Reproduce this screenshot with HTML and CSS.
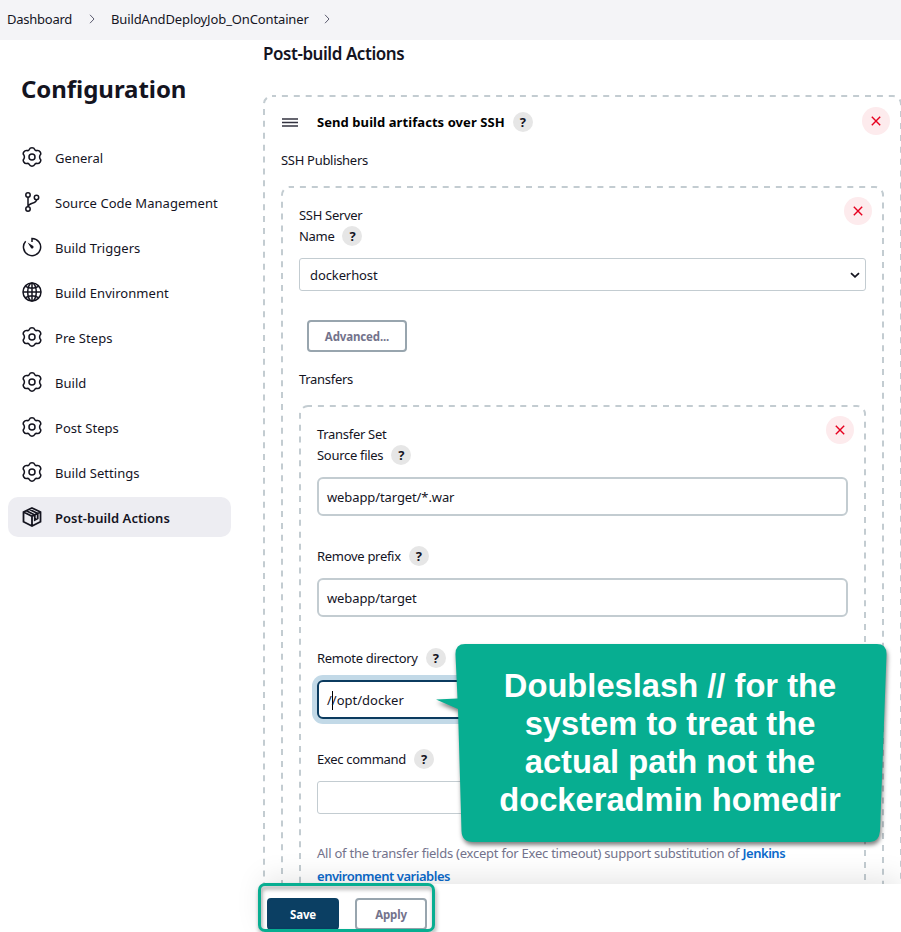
FILE: index.html
```html
<!DOCTYPE html>
<html lang="en">
<head>
<meta charset="utf-8">
<title>BuildAndDeployJob_OnContainer Config</title>
<link rel="stylesheet" href="styles.css">
</head>
<body>
<svg class="defs" width="0" height="0">
  <symbol id="cog" viewBox="0 0 20 20"><path d="M7.300 2.400Q7.900 .8 10 .8T12.700 2.400Q13.300 4 15 3.500Q17 3 18.200 5T18.200 7.900Q17 10 18.200 12.100Q19.400 13.200 18.200 15T15 16.500Q13.300 16 12.700 17.600Q12.100 19.200 10 19.200T7.300 17.600Q6.700 16 5 16.500Q3 17 1.800 15T1.800 12.100Q3 10 1.800 7.900Q.6 6.800 1.800 5T5 3.500Q6.700 4 7.300 2.400Z"/><circle cx="10" cy="10" r="3"/></symbol>
  <symbol id="cross" viewBox="0 0 10 10"><path d="M.8.8 9.200 9.200M9.200.8.8 9.200"/></symbol>
</svg>
<header class="crumbs">
  <span class="c1">Dashboard</span>
  <svg class="chev" viewBox="0 0 6 10"><path d="M1 .8 5 5 1 9.200"/></svg>
  <span class="c2">BuildAndDeployJob_OnContainer</span>
  <svg class="chev" viewBox="0 0 6 10"><path d="M1 .8 5 5 1 9.200"/></svg>
</header>
<div class="layout">
  <nav class="side">
    <h1>Configuration</h1>
    <a class="item"><svg class="ico"><use href="#cog"/></svg><span>General</span></a>
    <a class="item"><svg class="ico" viewBox="0 0 20 20"><circle cx="6" cy="3" r="2.200"/><circle cx="14.500" cy="5.500" r="2.200"/><circle cx="6" cy="17" r="2.200"/><path d="M6 5.200V14.800M14.500 7.700C14.500 12 6.500 10.500 6.100 14.500"/></svg><span>Source Code Management</span></a>
    <a class="item"><svg class="ico" viewBox="0 0 20 20"><path d="M10 5V1.400A8.600 8.600 0 1 1 3.700 4.200"/><path class="solid" d="M5.600 5.600 11.200 9A1.500 1.500 0 0 1 9.200 11.200Z"/></svg><span>Build Triggers</span></a>
    <a class="item"><svg class="ico" viewBox="0 0 20 20"><circle cx="10" cy="10" r="9"/><ellipse cx="10" cy="10" rx="4.300" ry="9"/><path d="M10 1V19M1 10H19M3.500 4.300Q10 8 16.500 4.300M3.500 15.700Q10 12 16.500 15.700"/></svg><span>Build Environment</span></a>
    <a class="item"><svg class="ico"><use href="#cog"/></svg><span>Pre Steps</span></a>
    <a class="item"><svg class="ico"><use href="#cog"/></svg><span>Build</span></a>
    <a class="item"><svg class="ico"><use href="#cog"/></svg><span>Post Steps</span></a>
    <a class="item"><svg class="ico"><use href="#cog"/></svg><span>Build Settings</span></a>
    <a class="item active"><svg class="ico heavy" viewBox="0 0 20 20"><path d="M10 1 18.500 5V14.700L10 19 1.500 14.700V5ZM1.500 5 10 9.300 18.500 5M10 9.300V19M4.300 3.700 12.800 8V13L15.700 11.500V6.500L7.200 2.200"/></svg><span>Post-build Actions</span></a>
  </nav>
  <main class="main">
    <h2>Post-build Actions</h2>
    <section class="box outer">
      <svg class="edge"><rect/></svg>
      <button class="close"><svg><use href="#cross"/></svg></button>
      <div class="row head"><svg class="grip" viewBox="0 0 16 9"><path d="M0 1H16M0 4.500H16M0 8H16"/></svg><b>Send build artifacts over SSH</b><i class="help">?</i></div>
      <div class="label pub">SSH Publishers</div>
      <section class="box mid">
        <svg class="edge"><rect/></svg>
        <button class="close"><svg><use href="#cross"/></svg></button>
        <div class="label">SSH Server</div>
        <div class="row label"><span>Name</span><i class="help">?</i></div>
        <div class="select"><span>dockerhost</span><svg viewBox="0 0 10 6"><path d="M1 1.200 5 4.800 9 1.200"/></svg></div>
        <button class="btn adv">Advanced...</button>
        <div class="label tr">Transfers</div>
        <section class="box inner">
          <svg class="edge"><rect/></svg>
          <button class="close"><svg><use href="#cross"/></svg></button>
          <div class="label">Transfer Set</div>
          <div class="row label"><span>Source files</span><i class="help">?</i></div>
          <div class="input">webapp/target/*.war</div>
          <div class="row label f2"><span>Remove prefix</span><i class="help">?</i></div>
          <div class="input">webapp/target</div>
          <div class="row label f3"><span>Remote directory</span><i class="help">?</i></div>
          <div class="input focus">/<span class="caret"></span>/opt/docker</div>
          <div class="row label f2"><span>Exec command</span><i class="help">?</i></div>
          <div class="area"></div>
          <p class="note">All of the transfer fields (except for Exec timeout) support substitution of <a>Jenkins</a><br><a>environment variables</a></p>
        </section>
      </section>
    </section>
  </main>
</div>
<footer class="bar"><button class="btn save">Save</button><button class="btn apply">Apply</button></footer>
<div class="frame"></div>
<div class="callout">
  <svg viewBox="0 0 460 210"><path d="M35 4H447Q457 4 456.500 15L450 191Q449 202 440 202H43Q32 202 31.500 191L28 69 6 59.500 27.500 58.500 25.500 15Q25 4 35 4Z"/></svg>
  <p>Doubleslash // for the<br>system to treat the<br>actual path not the<br>dockeradmin homedir</p>
</div>
</body>
</html>
```
FILE: styles.css
```css
* { box-sizing: border-box; }
html, body { height: 100%; overflow: hidden; }
body { margin: 0; display: flex; flex-direction: column; position: relative; background: #fff; color: #14141f; font: 13px/21px "Noto Sans", "Open Sans", sans-serif; letter-spacing: -0.1px; }
.defs { position: absolute; }
button { font-family: inherit; padding: 0; letter-spacing: inherit; }
svg { fill: none; stroke: currentColor; }

.crumbs { height: 40px; flex: none; background: #f4f4f7; display: flex; align-items: center; padding: 0 0 2px 7px; }
.crumbs .c1 { width: 82px; white-space: nowrap; letter-spacing: -0.25px; }
.crumbs .c2 { width: 213px; margin-left: 16px; white-space: nowrap; letter-spacing: -0.13px; }
.chev { width: 6px; height: 10px; color: #5c5c70; }

.layout { height: 844px; flex: none; display: flex; overflow: hidden; }
.side { width: 263px; flex: none; padding: 32px 32px 0 8px; display: flex; flex-direction: column; }
.side h1 { margin: 0 0 31px 13px; height: 34px; font-size: 24px; line-height: 34px; letter-spacing: -0.05px; }
.item { height: 40px; margin-bottom: 5px; flex: none; border-radius: 10px; display: flex; align-items: center; padding: 2px 0 0 14px; letter-spacing: 0.04px; }
.item span { margin-left: 13px; white-space: nowrap; }
.item.active { background: #ededf2; font-weight: 600; }
.ico { width: 20px; height: 20px; stroke-width: 1.5; position: relative; top: -1px; }
.heavy { stroke-width: 1.8; }
.solid { fill: currentColor; stroke: none; }

.main { width: 639px; flex: none; }
.main h2 { margin: 0; height: 55px; font-size: 17px; font-weight: 600; line-height: 28px; letter-spacing: -0.45px; }
.box { position: relative; border: 2px solid transparent; padding: 15px 16px 0; }
.edge { position: absolute; inset: -2px; width: calc(100% + 4px); height: calc(100% + 4px); pointer-events: none; }
.edge rect { x: 1px; y: 1px; width: calc(100% - 2px); height: calc(100% - 2px); rx: 8px; stroke: #c3ccd1; stroke-width: 2; stroke-dasharray: 6 5.900; stroke-dashoffset: 2; }
.outer { height: 900px; }
.mid { height: 800px; margin-top: 15px; padding-top: 17px; }
.inner { height: 600px; margin-top: 15px; padding-top: 17px; }
.close { position: absolute; top: 9px; right: 10px; width: 28px; height: 28px; border: 0; border-radius: 50%; background: #fdebed; color: #e6001f; display: flex; align-items: center; justify-content: center; }
.outer > .close { top: 10px; }
.close svg { width: 10px; height: 10px; stroke-width: 1.4; }
.row { display: flex; align-items: center; height: 21px; white-space: nowrap; }
.head { height: 20px; }
.head b { margin-left: 19px; color: #000; letter-spacing: 0.07px; }
.grip { width: 16px; height: 9px; color: #333340; stroke-width: 1.5; margin-left: 1px; }
.help { width: 20px; height: 20px; border-radius: 50%; background: #e6e6e6; font: 700 13px/20px "Noto Sans", sans-serif; text-align: center; margin-left: 8px; position: relative; top: -1px; }
.head .help { top: 0; }
.label { height: 21px; letter-spacing: -0.3px; }
.pub { margin-top: 18px; }
.select { height: 33px; margin-top: 11px; border: 1px solid #c3ccd1; border-radius: 3px; display: flex; align-items: center; justify-content: space-between; padding: 1px 5px 0 10px; }
.select svg { width: 10px; height: 6px; stroke-width: 1.8; }
.btn { display: block; height: 32px; border: 2px solid #98a5ae; border-radius: 4px; background: #fff; color: #73738c; font-size: 11.5px; font-weight: 700; letter-spacing: -0.15px; }
.adv { width: 100px; margin: 29px 0 0 8px; }
.tr { margin-top: 17px; }
.input { height: 39px; margin-top: 11px; border: 2px solid #c3ccd1; border-radius: 6px; background: #fff; display: flex; align-items: center; padding: 1px 0 0 8px; }
.f2 { margin-top: 30px; }
.f3 { margin-top: 31px; }
.focus { border-color: #0b3b5f; box-shadow: 0 0 0 5px #c2d9e7; letter-spacing: 0; }
.caret { width: 1px; height: 19px; background: #000; margin-right: -1px; }
.area { height: 33px; margin-top: 11px; border: 1px solid #c3ccd1; border-radius: 3px; }
.note { margin: 28px 0 0; line-height: 23px; color: #73738c; white-space: nowrap; letter-spacing: -0.24px; }
.note a { color: #0b6acb; font-weight: 600; letter-spacing: -0.47px; }

.bar { position: relative; flex: none; height: 48px; margin-left: 263px; padding: 14px 4px; display: flex; gap: 16px; background: #fff; box-shadow: 0 -6px 28px rgba(0,0,0,.1); }
.bar .btn { width: 72px; }
.bar .save { background: #0b3f63; border-color: #0b3f63; color: #fff; }
.frame { position: absolute; left: 258px; top: 883px; width: 177px; height: 49px; border: 3px solid #07ae91; border-radius: 7px; filter: drop-shadow(1px 3px 2px rgba(0,0,0,.4)); }
.callout { position: absolute; left: 430px; top: 640px; width: 460px; height: 210px; }
.callout svg { position: absolute; inset: 0; width: 460px; height: 210px; stroke: none; fill: #07ae91; filter: drop-shadow(1px 3px 2px rgba(0,0,0,.5)); overflow: visible; }
.callout p { position: relative; margin: 0; padding: 27px 0 0 20px; text-align: center; color: #fff; font: 700 32.7px/38px "Liberation Sans", sans-serif; letter-spacing: 0; }
```
